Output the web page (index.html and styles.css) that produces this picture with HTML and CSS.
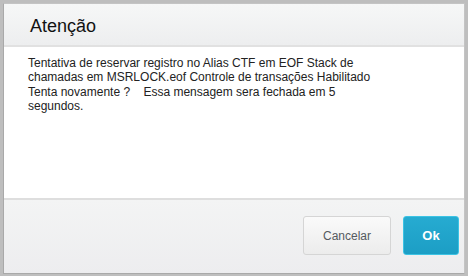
FILE: index.html
```html
<!DOCTYPE html>
<html lang="pt">
<head>
<meta charset="utf-8">
<title>Atenção</title>
<link rel="stylesheet" href="styles.css">
</head>
<body>
<div class="dialog">
  <div class="dialog-header">
    <h1 class="dialog-title">Atenção</h1>
  </div>
  <div class="dialog-body">
    <p class="message">Tentativa de reservar registro no Alias CTF em EOF Stack de<br>chamadas em MSRLOCK.eof Controle de transações Habilitado<br>Tenta novamente ? &nbsp;&nbsp; Essa mensagem sera fechada em 5<br>segundos.</p>
  </div>
  <div class="dialog-footer">
    <button class="btn btn-cancel">Cancelar</button>
    <button class="btn btn-ok">Ok</button>
  </div>
</div>
</body>
</html>
```
FILE: styles.css
```css
html, body {
  margin: 0;
  padding: 0;
  background: #bebebe;
  height: 100%;
}
body {
  padding: 3px 3px 2px 3px;
  box-sizing: border-box;
  font-family: "Liberation Sans", Arial, sans-serif;
}
.dialog {
  box-sizing: border-box;
  height: 271px;
  border: 1px solid #a9a9a9;
  border-top-color: #c4c4c4;
  border-right-color: #c4c4c4;
  background: #fff;
  display: flex;
  flex-direction: column;
}
.dialog-header {
  height: 43px;
  box-sizing: border-box;
  padding: 2px 0 0 26px;
  background: linear-gradient(#f6f7f7, #edeeef);
  border-bottom: 2px solid #e1e1e1;
  flex: none;
}
.dialog-title {
  margin: 0;
  font-size: 18px;
  font-weight: normal;
  line-height: 41px;
  color: #111;
}
.dialog-body {
  flex: 1;
  padding: 9px 24px 0 24px;
  border-bottom: 2px solid #dedede;
}
.message {
  margin: 0;
  font-size: 12px;
  line-height: 14.3px;
  color: #222;
  white-space: nowrap;
}
.dialog-footer {
  height: 73px;
  box-sizing: border-box;
  flex: none;
  background: linear-gradient(#f3f4f4, #ededef);
  display: flex;
  justify-content: flex-end;
  align-items: flex-start;
  gap: 12px;
  padding: 16px 5px 0 0;
}
.btn {
  height: 39px;
  border-radius: 3px;
  font-family: "Liberation Sans", Arial, sans-serif;
  padding: 0;
  margin: 0;
}
.btn-cancel {
  width: 88px;
  border: 1px solid #d5d5d5;
  background: linear-gradient(#fafafa, #ececec);
  color: #555a60;
  font-size: 12px;
}
.btn-ok {
  width: 56px;
  border: 1px solid #3cc3e4;
  background: linear-gradient(#26abd1, #1c9ec5);
  color: #fff;
  font-size: 13px;
  font-weight: bold;
}
```
